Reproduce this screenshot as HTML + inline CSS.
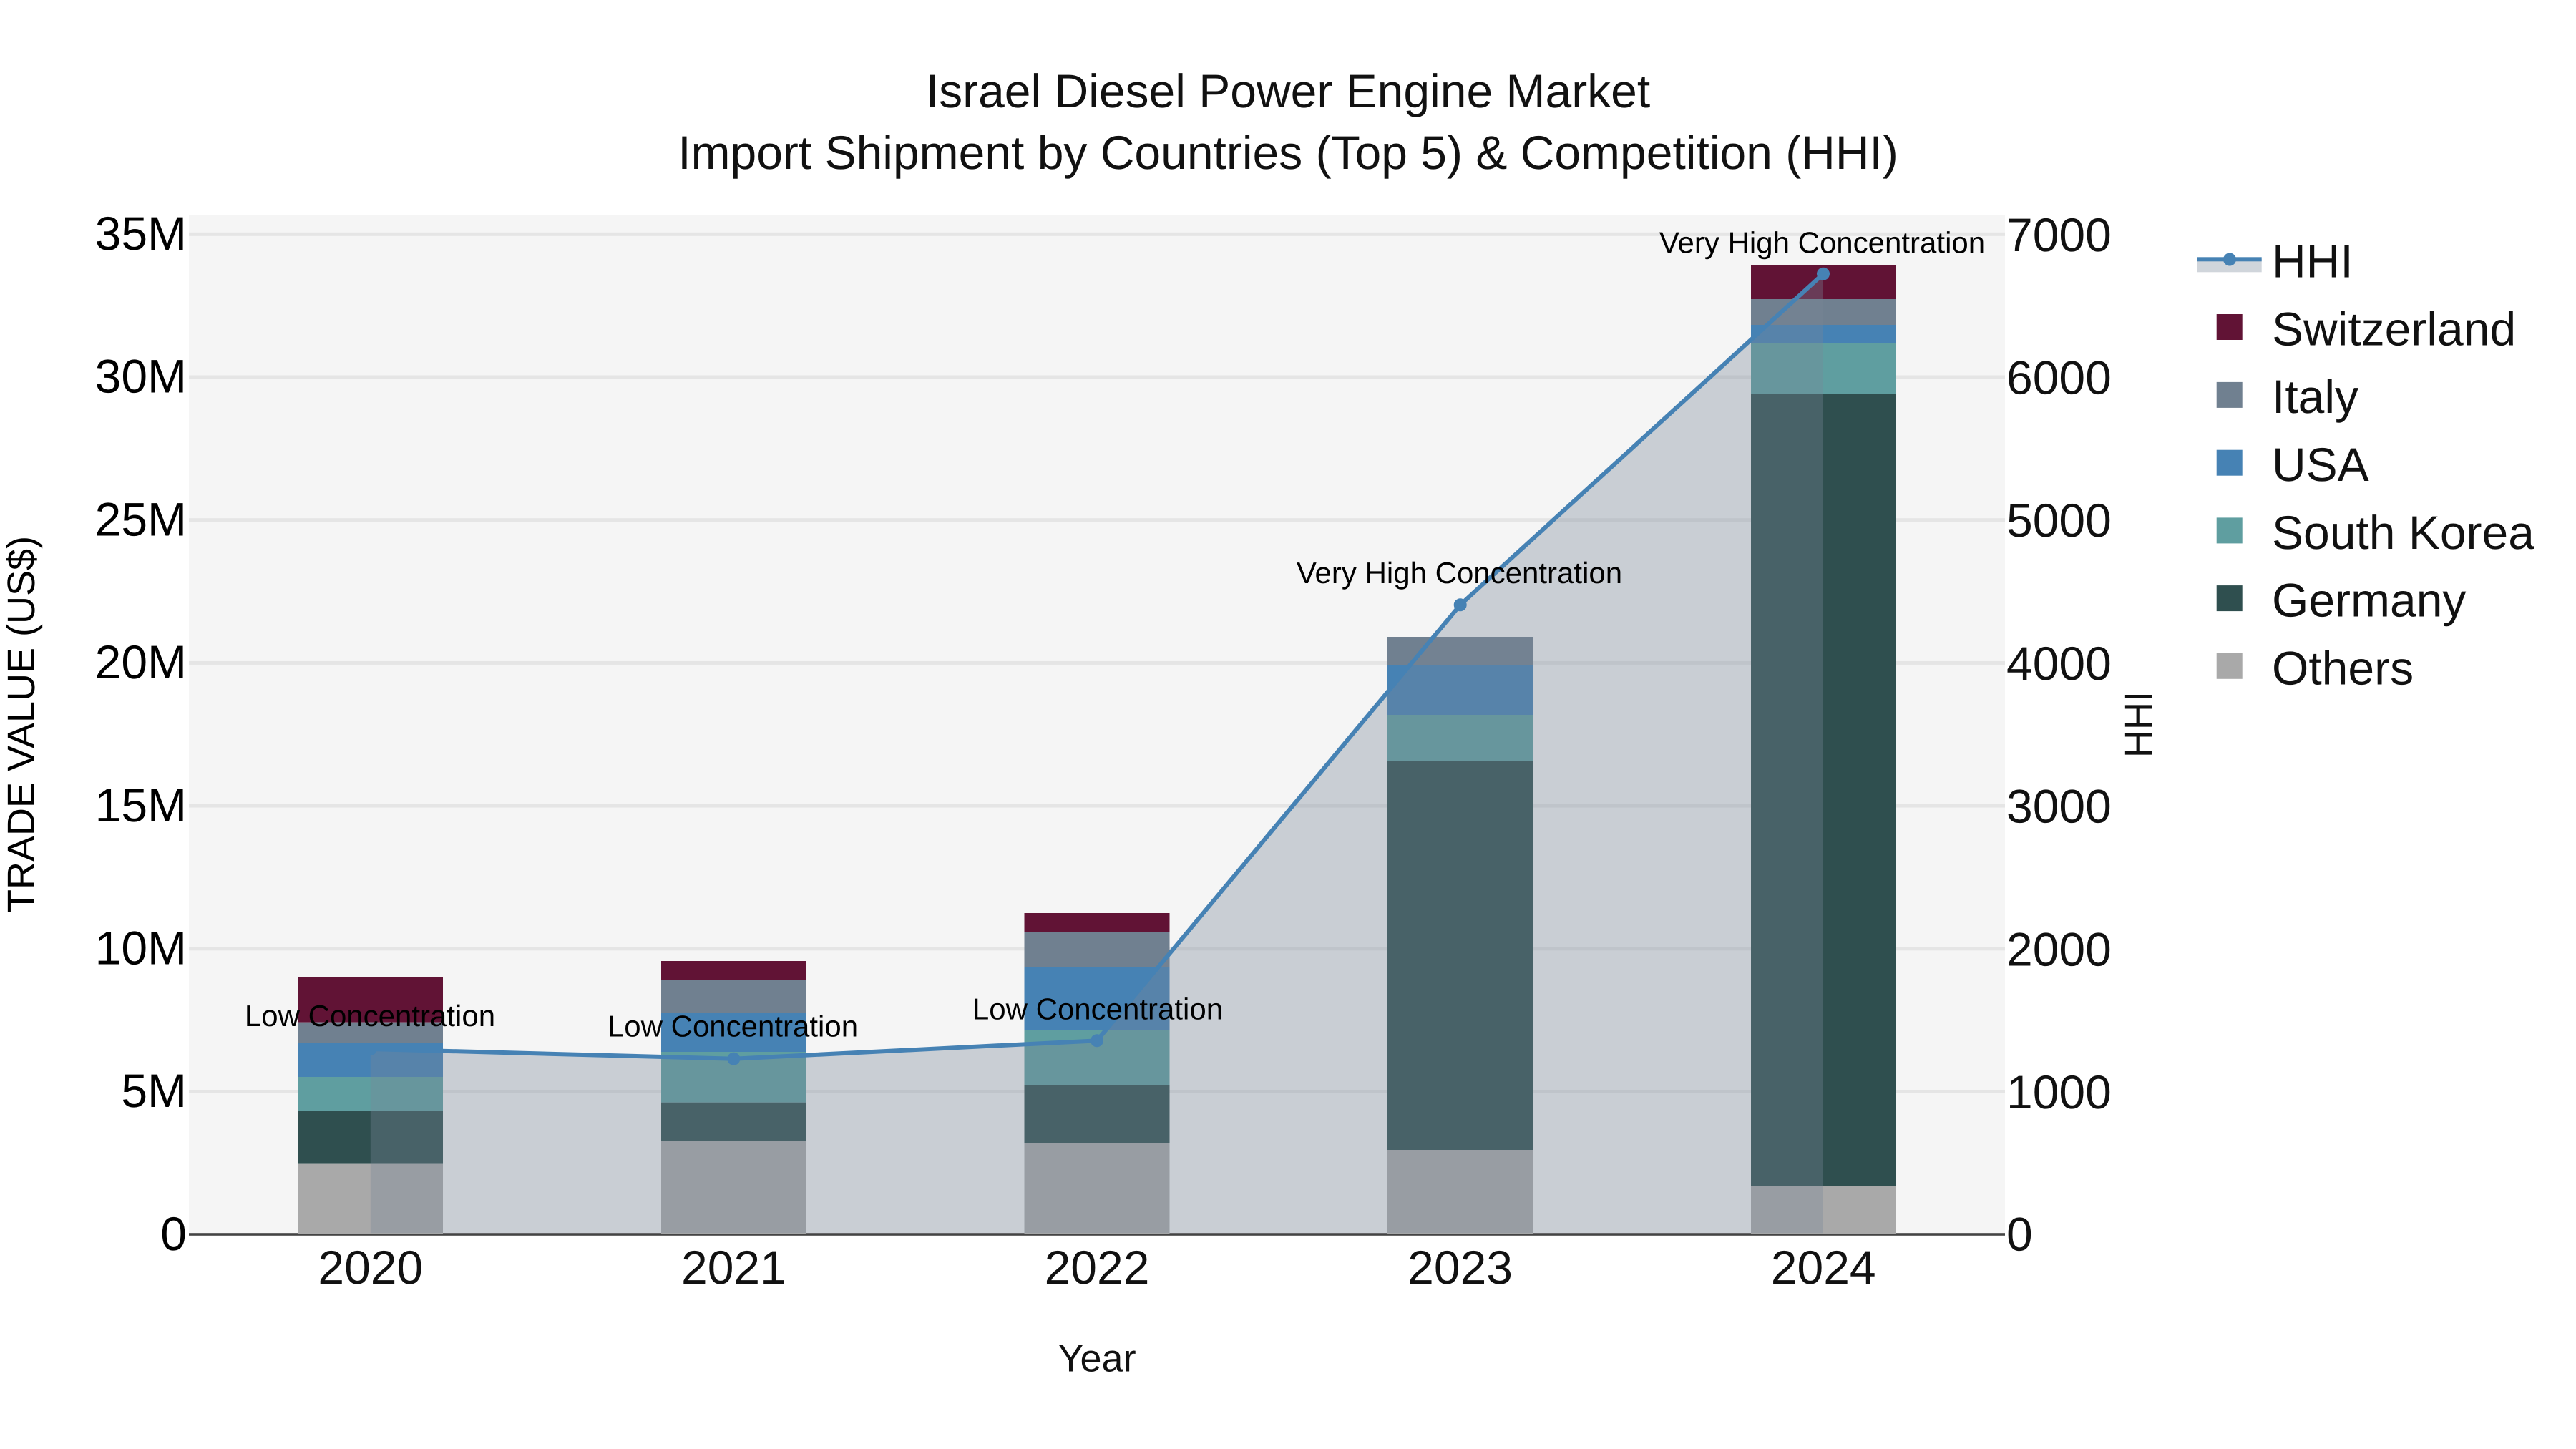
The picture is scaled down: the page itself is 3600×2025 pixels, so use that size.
<!DOCTYPE html>
<html lang="en">
<head>
<meta charset="utf-8">
<title>Israel Diesel Power Engine Market</title>
<style>
html,body{margin:0;padding:0;background:#fff;width:3600px;height:2025px;overflow:hidden}
svg{display:block}
text{font-family:"Liberation Sans",Arial,sans-serif;text-rendering:geometricPrecision;white-space:pre}
.t{font-size:66px;fill:#111;text-anchor:middle}
.yl{font-size:66px;fill:#000;text-anchor:end}
.yr{font-size:66px;fill:#111;text-anchor:start}
.x{font-size:66px;fill:#111;text-anchor:middle}
.ax{font-size:54px;fill:#111;text-anchor:middle}
.lg{font-size:66px;fill:#111}
.an{font-size:42px;fill:#000;text-anchor:middle}
.g{fill:#e5e5e5}
.s{fill:#611335}.i{fill:#708090}.u{fill:#4682b4}.k{fill:#5f9ea0}.d{fill:#2f4f4f}.o{fill:#a9a9a9}
</style>
</head>
<body>
<svg width="3600" height="2025" viewBox="0 0 3600 2025" xmlns="http://www.w3.org/2000/svg">
<rect x="0" y="0" width="3600" height="2025" fill="#ffffff"/>
<rect x="264" y="300" width="2538" height="1425" fill="#f5f5f5"/>

<!-- grid -->
<rect class="g" x="264" y="324.8" width="2538" height="5"/>
<rect class="g" x="264" y="524.5" width="2538" height="5"/>
<rect class="g" x="264" y="724.2" width="2538" height="5"/>
<rect class="g" x="264" y="923.9" width="2538" height="5"/>
<rect class="g" x="264" y="1123.6" width="2538" height="5"/>
<rect class="g" x="264" y="1323.3" width="2538" height="5"/>
<rect class="g" x="264" y="1523" width="2538" height="5"/>
<rect x="264" y="1723.2" width="2538" height="3.6" fill="#444444"/>

<!-- 2020 -->
<rect class="s" x="416" y="1366" width="203" height="62.7"/>
<rect class="i" x="416" y="1428.7" width="203" height="29"/>
<rect class="u" x="416" y="1457.7" width="203" height="47.3"/>
<rect class="k" x="416" y="1505" width="203" height="47.7"/>
<rect class="d" x="416" y="1552.7" width="203" height="74"/>
<rect class="o" x="416" y="1626.7" width="203" height="98.3"/>
<!-- 2021 -->
<rect class="s" x="924" y="1343" width="203" height="26"/>
<rect class="i" x="924" y="1369" width="203" height="47"/>
<rect class="u" x="924" y="1416" width="203" height="54"/>
<rect class="k" x="924" y="1470" width="203" height="70.7"/>
<rect class="d" x="924" y="1540.7" width="203" height="54.3"/>
<rect class="o" x="924" y="1595" width="203" height="130"/>
<!-- 2022 -->
<rect class="s" x="1431.5" y="1276" width="203" height="27"/>
<rect class="i" x="1431.5" y="1303" width="203" height="49"/>
<rect class="u" x="1431.5" y="1352" width="203" height="87"/>
<rect class="k" x="1431.5" y="1439" width="203" height="78"/>
<rect class="d" x="1431.5" y="1517" width="203" height="80.7"/>
<rect class="o" x="1431.5" y="1597.7" width="203" height="127.3"/>
<!-- 2023 -->
<rect class="i" x="1939" y="890" width="203" height="39"/>
<rect class="u" x="1939" y="929" width="203" height="70"/>
<rect class="k" x="1939" y="999" width="203" height="64.7"/>
<rect class="d" x="1939" y="1063.7" width="203" height="543.3"/>
<rect class="o" x="1939" y="1607" width="203" height="118"/>
<!-- 2024 -->
<rect class="s" x="2447" y="371" width="203" height="47"/>
<rect class="i" x="2447" y="418" width="203" height="36"/>
<rect class="u" x="2447" y="454" width="203" height="26"/>
<rect class="k" x="2447" y="480" width="203" height="71"/>
<rect class="d" x="2447" y="551" width="203" height="1106"/>
<rect class="o" x="2447" y="1657" width="203" height="68"/>

<!-- HHI area + line -->
<polygon points="517.8,1466 1025.3,1479.7 1533,1454.3 2040.7,845.3 2548,382.7 2548,1723.3 517.8,1723.3" fill="rgba(119,136,153,0.35)"/>
<polyline points="517.8,1466 1025.3,1479.7 1533,1454.3 2040.7,845.3 2548,382.7" fill="none" stroke="#4682b4" stroke-width="6" stroke-linejoin="round"/>
<circle cx="517.8" cy="1466" r="9" fill="#4682b4"/>
<circle cx="1025.3" cy="1479.7" r="9" fill="#4682b4"/>
<circle cx="1533" cy="1454.3" r="9" fill="#4682b4"/>
<circle cx="2040.7" cy="845.3" r="9" fill="#4682b4"/>
<circle cx="2548" cy="382.7" r="9" fill="#4682b4"/>

<!-- annotations -->
<text class="an" x="517" y="1434">Low Concentration</text>
<text class="an" x="1024" y="1448.3">Low Concentration</text>
<text class="an" x="1534" y="1424.3">Low Concentration</text>
<text class="an" x="2039.5" y="815">Very High Concentration</text>
<text class="an" x="2546.5" y="353.3">Very High Concentration</text>

<!-- title -->
<text class="t" x="1800" y="150">Israel Diesel Power Engine Market</text>
<text class="t" x="1800" y="236">Import Shipment by Countries (Top 5) &amp; Competition (HHI)</text>

<!-- left ticks -->
<text class="yl" x="261" y="349">35M</text>
<text class="yl" x="261" y="548.7">30M</text>
<text class="yl" x="261" y="748.4">25M</text>
<text class="yl" x="261" y="948.1">20M</text>
<text class="yl" x="261" y="1147.8">15M</text>
<text class="yl" x="261" y="1347.5">10M</text>
<text class="yl" x="261" y="1547.2">5M</text>
<text class="yl" x="261" y="1747">0</text>

<!-- right ticks -->
<text class="yr" x="2804" y="350.8">7000</text>
<text class="yr" x="2804" y="550.5">6000</text>
<text class="yr" x="2804" y="750.2">5000</text>
<text class="yr" x="2804" y="949.9">4000</text>
<text class="yr" x="2804" y="1149.6">3000</text>
<text class="yr" x="2804" y="1349.3">2000</text>
<text class="yr" x="2804" y="1549">1000</text>
<text class="yr" x="2804" y="1747.5">0</text>

<!-- x ticks -->
<text class="x" x="517.8" y="1794">2020</text>
<text class="x" x="1025.4" y="1794">2021</text>
<text class="x" x="1533" y="1794">2022</text>
<text class="x" x="2040.6" y="1794">2023</text>
<text class="x" x="2548.2" y="1794">2024</text>

<!-- axis titles -->
<text class="ax" x="1533" y="1916.7">Year</text>
<text class="ax" style="fill:#000" transform="translate(48,1012.5) rotate(-90)">TRADE VALUE (US$)</text>
<text class="ax" transform="translate(3007,1012.5) rotate(-90)">HHI</text>

<!-- legend -->
<rect x="3070.7" y="362" width="90" height="18.3" fill="rgba(119,136,153,0.35)"/>
<rect x="3070.7" y="359.3" width="90" height="6" fill="#4682b4"/>
<circle cx="3116" cy="362.5" r="9" fill="#4682b4"/>
<text class="lg" x="3175" y="387.7">HHI</text>

<rect class="s" x="3097.7" y="439" width="36" height="36"/>
<text class="lg" x="3175" y="482.4">Switzerland</text>
<rect class="i" x="3097.7" y="533.9" width="36" height="36"/>
<text class="lg" x="3175" y="577.1">Italy</text>
<rect class="u" x="3097.7" y="628.7" width="36" height="36"/>
<text class="lg" x="3175" y="672">USA</text>
<rect class="k" x="3097.7" y="723.4" width="36" height="36"/>
<text class="lg" x="3175" y="766.8">South Korea</text>
<rect class="d" x="3097.7" y="818.1" width="36" height="36"/>
<text class="lg" x="3175" y="861.5">Germany</text>
<rect class="o" x="3097.7" y="912.8" width="36" height="36"/>
<text class="lg" x="3175" y="956.3">Others</text>
</svg>
</body>
</html>
